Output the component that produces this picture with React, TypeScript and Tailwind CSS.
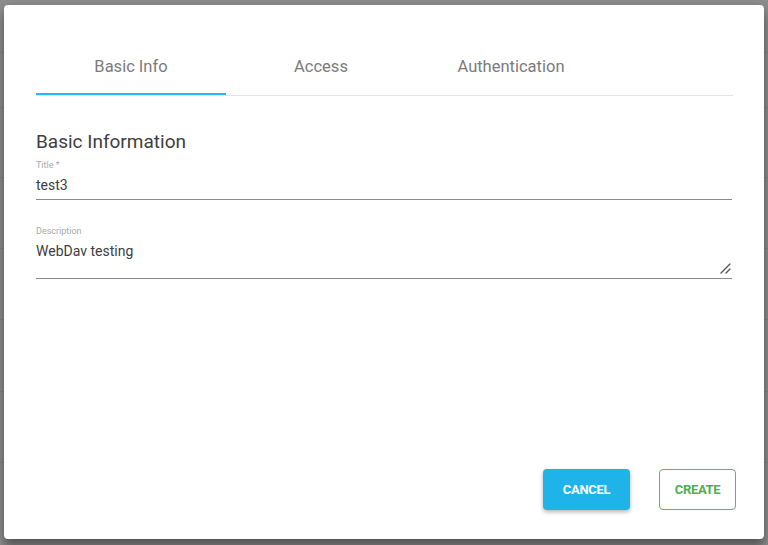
import { JSX } from 'react'

const TABS = ['Basic Info', 'Access', 'Authentication']

function Backdrop(): JSX.Element {
  // faint table rows of the page behind the modal
  return (
    <div className="absolute inset-0 flex flex-col bg-[#8e8e8e]">
      <div className="h-[53px] border-b border-[#858585]" />
      <div className="h-[55px] border-b border-[#858585]" />
      <div className="h-[70px] border-b border-[#858585]" />
      <div className="h-[71px] border-b border-[#858585]" />
      <div className="h-[71px] border-b border-[#858585]" />
      <div className="h-[72px] border-b border-[#858585]" />
      <div className="h-[71px] border-b border-[#858585]" />
    </div>
  )
}

function Field({ label, value, tall }: { label: string; value: string; tall?: boolean }): JSX.Element {
  return (
    <div className="relative flex flex-col border-b border-[#8a8a8a]">
      <span className="text-[9px] leading-[12px] text-[#a8a8a8]">{label}</span>
      <span className={`mt-[4px] text-[14px] leading-[20px] text-[#3d3d3d] ${tall ? 'pb-[17px]' : 'pb-[4px]'}`}>{value}</span>
      {tall ? (
        <svg className="absolute bottom-[4px] right-[1px]" width="12" height="12" viewBox="0 0 12 12">
          <path d="M11 2 L2 11 M11 7 L7 11" stroke="#555" strokeWidth="1.4" strokeLinecap="round" />
        </svg>
      ) : null}
    </div>
  )
}

export default function App(): JSX.Element {
  return (
    <div className="relative h-[545px] w-[768px] overflow-hidden font-['Roboto',sans-serif]">
      <Backdrop />
      <div className="relative pl-[4px] pt-[5px]">
        <div className="flex h-[534px] w-[760px] flex-col rounded bg-white px-8 pt-[38px] shadow-[0_8px_10px_rgba(0,0,0,0.3),0_3px_14px_rgba(0,0,0,0.2)]">
          <div className="flex w-[697px] border-b border-[#e2e2e2]">
            {TABS.map((tab, i) => (
              <div
                key={tab}
                className={`flex h-[52px] w-[190px] justify-center pt-3 text-[16.5px] leading-[24px] text-[#7b7b7b] ${i === 0 ? 'border-b-2 border-[#29b6f6]' : ''}`}
              >
                {tab}
              </div>
            ))}
          </div>

          <h2 className="mt-[34px] text-[19px] leading-[24px] text-[#404040]">Basic Information</h2>
          <div className="mt-[5px] flex flex-col gap-[25px]">
            <Field label="Title *" value="test3" />
            <Field label="Description" value="WebDav testing" tall />
          </div>

          <div className="mt-auto flex justify-end gap-[29px] pb-[29px]">
            <button className="h-[41px] w-[87px] rounded bg-[#1eb4ea] text-[13px] font-bold tracking-tight text-white shadow-[0_2px_4px_rgba(0,0,0,0.3)]">
              CANCEL
            </button>
            <button className="mr-[-4px] h-[41px] w-[77px] rounded border border-[#5cb85c] bg-white text-[13px] font-bold tracking-tight text-[#4caf50]">
              CREATE
            </button>
          </div>
        </div>
      </div>
    </div>
  )
}
